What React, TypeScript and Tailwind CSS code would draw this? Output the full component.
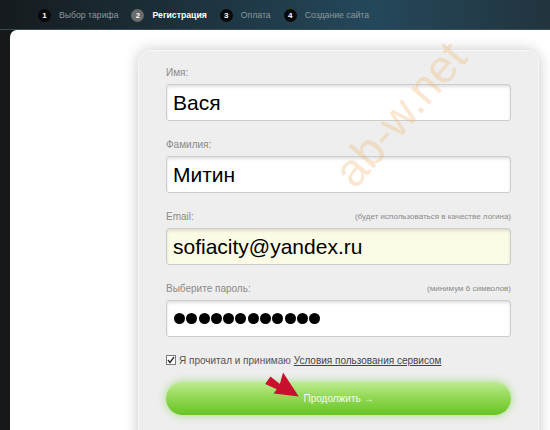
import React from "react";

const steps = [
  { n: "1", label: "Выбор тарифа", active: false },
  { n: "2", label: "Регистрация", active: true },
  { n: "3", label: "Оплата", active: false },
  { n: "4", label: "Создание сайта", active: false },
];

function Field({
  label,
  hint,
  children,
  yellow,
}: {
  label: string;
  hint?: string;
  children: React.ReactNode;
  yellow?: boolean;
}) {
  return (
    <div className="mb-[17px]">
      <div className="flex h-[14px] items-center justify-between">
        <span className="text-[10px] leading-[14px] text-[#8a8a8a]">{label}</span>
        {hint && <span className="text-[8px] leading-[14px] text-[#8a8a8a]">{hint}</span>}
      </div>
      <div
        className={`mt-[4px] flex h-[37px] items-center rounded-[3px] border border-[#cdcdcd] pl-[6px] text-[21px] text-black shadow-[inset_0_2px_3px_rgba(0,0,0,0.12)] ${
          yellow ? "bg-[#fbfbe6]" : "bg-white"
        }`}
      >
        {children}
      </div>
    </div>
  );
}

export default function App() {
  return (
    <div
      className="relative h-[430px] w-[550px] overflow-hidden bg-[#16191b]"
      style={{ fontFamily: '"Liberation Sans", Arial, sans-serif' }}
    >
      {/* top steps bar */}
      <div className="flex h-[30px] items-center border-b border-[#3a4c56] bg-[linear-gradient(90deg,#151b1e_0%,#1c2f39_30%,#24485b_68%,#22343e_100%)] pl-[38px] pt-[3px]">
        {steps.map((s) => (
          <div key={s.n} className="mr-[13px] flex items-center">
            <div
              className={`flex h-[13px] w-[13px] items-center justify-center rounded-full text-[8px] font-bold text-white ${
                s.active ? "bg-[#6b6b6b]" : "bg-[#070809]"
              }`}
            >
              {s.n}
            </div>
            <span
              className={`ml-[8px] text-[8.7px] ${
                s.active ? "font-bold text-white" : "text-[#8b979d]"
              }`}
            >
              {s.label}
            </span>
          </div>
        ))}
      </div>

      {/* white card */}
      <div className="ml-[10px] h-[400px] rounded-tl-[7px] bg-white pl-[128px] pt-[20px]">
        <div className="h-[420px] w-[401px] rounded-[12px] border border-[#f7f7f7] bg-[#eeeeee] px-[27px] pt-[15px] shadow-[0_0_14px_rgba(0,0,0,0.22)]">
          <Field label="Имя:">Вася</Field>
          <Field label="Фамилия:">Митин</Field>
          <Field label="Email:" hint="(будет использоваться в качестве логина)" yellow>
            sofiacity@yandex.ru
          </Field>
          <Field label="Выберите пароль:" hint="(минимум 6 символов)">
            <div className="ml-[1px] flex gap-[1.3px]">
              {Array.from({ length: 12 }).map((_, i) => (
                <div key={i} className="h-[11px] w-[11px] rounded-full bg-black" />
              ))}
            </div>
          </Field>

          <div className="-mt-[1px] flex h-[14px] items-center text-[10px] text-[#555]">
            <div className="flex h-[10px] w-[10px] items-center justify-center border border-[#7a7a7a] bg-white">
              <svg width="8" height="8" viewBox="0 0 8 8">
                <path d="M1 4 L3 6.5 L7 1" stroke="#333" strokeWidth="1.4" fill="none" />
              </svg>
            </div>
            <span className="ml-[3px]">Я прочитал и принимаю</span>
            <span className="ml-[3px] text-[#444] underline">Условия пользования сервисом</span>
          </div>

          <div className="mt-[15px] flex h-[33px] items-center justify-center rounded-full bg-[linear-gradient(180deg,#bdeb92_0%,#93d957_45%,#68c425_100%)] text-[10px] text-white/90 shadow-[0_0_8px_rgba(120,210,60,0.65)]">
            Продолжить →
          </div>
        </div>
      </div>

      {/* red arrow */}
      <svg className="absolute left-[261px] top-[369px]" width="42" height="32" viewBox="0 0 40 30">
        <polygon points="9,7 18,14 21,3 36,26 12,23 15,19 4,14" fill="#c9102f" />
      </svg>

      {/* watermark */}
      <div
        className="absolute left-[400px] top-[114px] whitespace-nowrap text-[46px] leading-none text-[#f2b36a] opacity-30"
        style={{ transform: "translate(-50%,-50%) rotate(-49deg)" }}
      >
        ab-w.net
      </div>
    </div>
  );
}
